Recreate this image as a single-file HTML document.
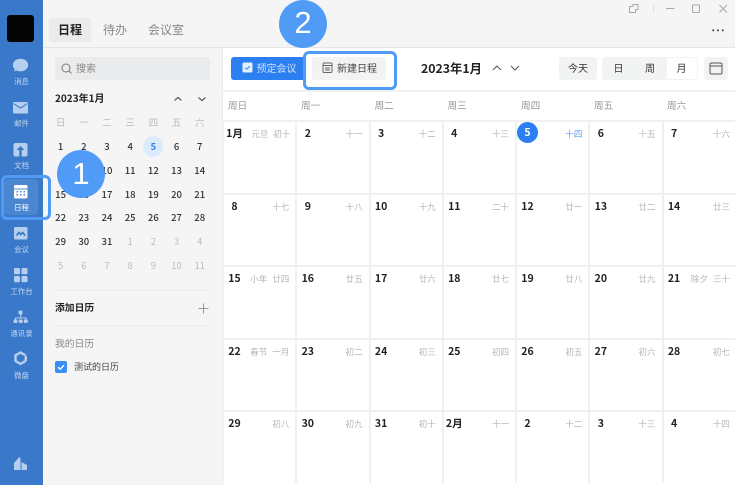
<!DOCTYPE html>
<html lang="zh"><head><meta charset="utf-8"><style>
*{box-sizing:border-box;margin:0;padding:0}
html,body{width:735px;height:485px;overflow:hidden;background:#f5f5f5}
body{position:relative;font-family:"Liberation Sans","Noto Sans CJK SC",sans-serif;color:#333}
.a,.t{position:absolute}
.t{white-space:nowrap;line-height:14px;font-family:"Noto Sans CJK SC","Liberation Sans",sans-serif}
.side{left:0;top:0;width:43px;height:485px;background:#3a78c9}
.lb{left:0;width:43px;text-align:center;font-size:7.4px;color:#c3d7f0;line-height:10px}
.tab{font-size:12px;top:23px;color:#888}
.mini{left:49px;top:115px;display:grid;grid-template-columns:repeat(7,23.2px);grid-auto-rows:23.85px;position:absolute;font-family:"Noto Sans CJK SC",sans-serif;font-size:9.5px;font-weight:500;text-align:center;line-height:14px;color:#333}
.mini span{display:block;padding-top:0}
.mini .g{color:#bbb;font-weight:400}
.main{left:222px;top:48px;width:513px;height:437px;background:#fff;border-left:1px solid #ececec}
.grid{position:absolute;left:222px;top:120px;width:513px;display:grid;grid-template-columns:73.3px 73.3px 73.2px 73.2px 73.4px 73.2px 74.4px;grid-auto-rows:72.6px;font-family:"Noto Sans CJK SC",sans-serif}
.c{position:relative;border-top:2px solid #f0f0f0;border-left:2px solid #f0f0f0}
.c b{position:absolute;left:.5px;top:5px;width:20px;text-align:center;font-size:10.5px;line-height:14px;color:#222;font-weight:700}
.c i{position:absolute;right:6px;top:6px;font-style:normal;font-size:8.5px;line-height:12px;color:#b5b5b5}
.c u{position:absolute;right:28px;top:6px;text-decoration:none;font-size:8.5px;line-height:12px;color:#b5b5b5}
.w{top:98px;font-size:9.6px;color:#999}
.circ{background:#4f9bf5;border-radius:50%;color:#fff;text-align:center;font-family:"Liberation Sans",sans-serif}
</style></head><body>

<div class="a side"></div>
<div class="a" style="left:7px;top:15px;width:27px;height:27px;background:#050505;border-radius:3px"></div>

<svg class="a" style="left:0;top:0" width="43" height="485" viewBox="0 0 43 485">
<g fill="#b6cfee">
<ellipse cx="20.500" cy="65" rx="7.600" ry="6.300"/>
<path d="M15 68l-.8 3.600 4-1.600z"/>
<rect x="13" y="102" width="15" height="11.500" rx="1"/>
<path fill-rule="evenodd" d="M15.500 143h10a2 2 0 0 1 2 2v9.500a2 2 0 0 1-2 2h-10a2 2 0 0 1-2-2V145a2 2 0 0 1 2-2zM20.500 146l-4 4h2.800v6.500h2.400V150h2.800z"/>
<rect x="14" y="227" width="13.500" height="12.500" rx="1.500"/>
<rect x="14" y="268" width="6" height="6.300" rx="1.200"/><rect x="21.500" y="268" width="6" height="6.300" rx="1.200"/>
<rect x="14" y="276" width="6" height="6.300" rx="1.200"/><rect x="21.500" y="276" width="6" height="6.300" rx="1.200"/>
<rect x="18.500" y="310.500" width="4" height="4" rx="1"/>
<rect x="13.500" y="319.500" width="4" height="3.500" rx="1"/><rect x="18.700" y="319.500" width="4" height="3.500" rx="1"/><rect x="23.800" y="319.500" width="4" height="3.500" rx="1"/>
<path d="M15 319.500v-2h11.500v2h-1v-1H16v1zM20.200 314.500h1v3h-1z"/>
<path d="M14 470v-7l5.300-6 1.200 1.500V470z"/>
<path d="M21.500 462l5.500 3v5h-5.500z"/>
</g>
<path d="M25.500 355.300l-5-2.800-5 2.800v5.800l5 2.800 5-2.800" fill="none" stroke="#b6cfee" stroke-width="2.400"/>
<path d="M24.500 356.500l2.500-1v6l-2.500-1z" fill="#b6cfee"/>
<path d="M13.500 103.500l7 4.600 7-4.600" fill="none" stroke="#3a78c9" stroke-width="1"/>
<path d="M16.500 235.500l2.400-3 1.900 2 1.900-2 2.400 3" fill="none" stroke="#3a78c9" stroke-width="1.700"/>
<rect x="4" y="179" width="34" height="36" rx="4" fill="#4b86d1"/>
<rect x="14" y="185" width="13.500" height="13.500" rx="1.500" fill="#fff"/>
<g fill="#4b86d1"><rect x="14" y="188.500" width="13.500" height="1"/>
<rect x="16.500" y="191" width="1.500" height="1.500"/><rect x="20" y="191" width="1.500" height="1.500"/><rect x="23.500" y="191" width="1.500" height="1.500"/>
<rect x="16.500" y="194" width="1.500" height="1.500"/><rect x="20" y="194" width="1.500" height="1.500"/><rect x="23.500" y="194" width="1.500" height="1.500"/></g>
</svg>

<div class="t lb" style="top:77px">消息</div>
<div class="t lb" style="top:119px">邮件</div>
<div class="t lb" style="top:161px">文档</div>
<div class="t lb" style="top:203px;color:#fff">日程</div>
<div class="t lb" style="top:245px">会议</div>
<div class="t lb" style="top:287px">工作台</div>
<div class="t lb" style="top:329px">通讯录</div>
<div class="t lb" style="top:371px">微盘</div>

<!-- top tabs -->
<div class="a" style="left:43px;top:47px;width:692px;height:1px;background:#e6e6e6"></div>
<div class="a" style="left:49px;top:18px;width:42px;height:24px;background:#ebebeb;border-radius:3px"></div>
<div class="t tab" style="left:58px;color:#222;font-weight:700">日程</div>
<div class="t tab" style="left:103px">待办</div>
<div class="t tab" style="left:148px">会议室</div>

<!-- window controls -->
<svg class="a" style="left:620px;top:0" width="115" height="40" viewBox="0 0 115 40" fill="none" stroke="#a8a8a8" stroke-width="1">
<path d="M9.500 6.500h3.500V4.500h5v5h-2.500v3h-6z"/>
<path d="M33.500 5v8" stroke="#e2e2e2"/>
<path d="M46 8.500h8.500"/>
<rect x="72.500" y="5" width="7" height="7.500" rx="1"/>
<path d="M99.500 5l7.500 7.500M107 5l-7.500 7.500"/>
<g fill="#555" stroke="none"><circle cx="93.200" cy="30.300" r="1.100"/><circle cx="98" cy="30.300" r="1.100"/><circle cx="102.800" cy="30.300" r="1.100"/></g>
</svg>

<!-- left panel -->
<div class="a" style="left:55px;top:57px;width:155px;height:23px;background:#eaebec;border-radius:3px"></div>
<svg class="a" style="left:60px;top:62px" width="13" height="13" viewBox="0 0 13 13" fill="none" stroke="#777" stroke-width="1"><circle cx="6" cy="6" r="4"/><path d="M9 9l2.500 2.500"/></svg>
<div class="t" style="left:76px;top:61px;font-size:10px;color:#888">搜索</div>
<div class="t" style="left:55px;top:91px;font-size:10px;font-weight:700;color:#222">2023年1月</div>
<svg class="a" style="left:170px;top:92px" width="40" height="14" viewBox="0 0 40 14" fill="none" stroke="#444" stroke-width="1.100"><path d="M4.500 8.500l3.500-3 3.500 3"/><path d="M28.500 5.500l3.500 3 3.500-3"/></svg>

<div class="a" style="left:142.500px;top:136px;width:20.500px;height:20.500px;border-radius:50%;background:#dcebfc"></div>
<div class="mini">
<span class="g">日</span><span class="g">一</span><span class="g">二</span><span class="g">三</span><span class="g">四</span><span class="g">五</span><span class="g">六</span>
<span>1</span><span>2</span><span>3</span><span>4</span><span style="color:#2b7ff0;font-weight:700">5</span><span>6</span><span>7</span>
<span>8</span><span>9</span><span>10</span><span>11</span><span>12</span><span>13</span><span>14</span>
<span>15</span><span>16</span><span>17</span><span>18</span><span>19</span><span>20</span><span>21</span>
<span>22</span><span>23</span><span>24</span><span>25</span><span>26</span><span>27</span><span>28</span>
<span>29</span><span>30</span><span>31</span><span class="g">1</span><span class="g">2</span><span class="g">3</span><span class="g">4</span>
<span class="g">5</span><span class="g">6</span><span class="g">7</span><span class="g">8</span><span class="g">9</span><span class="g">10</span><span class="g">11</span>
</div>

<div class="a" style="left:55px;top:290px;width:155px;height:1px;background:#ebebeb"></div>
<div class="a" style="left:55px;top:325px;width:155px;height:1px;background:#ebebeb"></div>
<div class="t" style="left:55px;top:300px;font-size:9.800px;font-weight:700;color:#222">添加日历</div>
<svg class="a" style="left:198px;top:303px" width="11" height="11" viewBox="0 0 11 11" stroke="#999" stroke-width="1"><path d="M0.500 5.500h10M5.500 0.500v10"/></svg>
<div class="t" style="left:55px;top:336px;font-size:9.800px;color:#888">我的日历</div>
<div class="a" style="left:55px;top:361px;width:12px;height:12px;background:#3b8ef3;border-radius:2px"></div>
<svg class="a" style="left:55px;top:361px" width="12" height="12" viewBox="0 0 12 12" fill="none" stroke="#fff" stroke-width="1.400"><path d="M3 6.200l2.200 2 3.800-4"/></svg>
<div class="t" style="left:74px;top:360px;font-size:9px;color:#444">测试的日历</div>

<!-- main -->
<div class="a main"></div>
<div class="a" style="left:223px;top:90px;width:512px;height:1.500px;background:#f0f0f0"></div>

<div class="a" style="left:231px;top:57px;width:75px;height:23px;background:#2b7ff0;border-radius:3px"></div>
<svg class="a" style="left:242px;top:62px" width="12" height="12" viewBox="0 0 12 12"><rect x="0.500" y="0.500" width="10" height="10" rx="1.500" fill="#e4effd"/><path d="M3.200 5.600l1.700 1.600 2.800-3" fill="none" stroke="#2b7ff0" stroke-width="1"/></svg>
<div class="t" style="left:256.500px;top:61px;font-size:10px;color:#cfe2fb">预定会议</div>

<div class="a" style="left:312px;top:57px;width:74px;height:23px;background:#f3f3f3;border-radius:3px"></div>
<svg class="a" style="left:322px;top:62px" width="12" height="12" viewBox="0 0 12 12" fill="none" stroke="#666" stroke-width="1"><rect x="1" y="1" width="9" height="9.500" rx="1"/><path d="M1 3.500h9M3 6h5M3 8h5" /></svg>
<div class="t" style="left:337px;top:61px;font-size:10px;color:#444">新建日程</div>
<div class="a" style="left:303px;top:51px;width:94px;height:39px;border:3px solid #4f9bf5;border-radius:6px"></div>

<div class="t" style="left:421px;top:61px;font-size:12.300px;font-weight:700;color:#222">2023年1月</div>
<svg class="a" style="left:490px;top:61px" width="34" height="14" viewBox="0 0 34 14" fill="none" stroke="#555" stroke-width="1"><path d="M3 9l4-4 4 4"/><path d="M21 5l4 4 4-4"/></svg>

<div class="a" style="left:559px;top:57px;width:38px;height:23px;background:#f2f3f3;border-radius:3px"></div>
<div class="t" style="left:568px;top:61px;font-size:10px;color:#333">今天</div>
<div class="a" style="left:602px;top:57px;width:96px;height:23px;background:#f2f3f3;border-radius:3px"></div>
<div class="a" style="left:667px;top:58px;width:30px;height:21px;background:#fff"></div>
<div class="t" style="left:613.500px;top:61px;font-size:10px;color:#333">日</div>
<div class="t" style="left:645px;top:61px;font-size:10px;color:#333">周</div>
<div class="t" style="left:676.500px;top:61px;font-size:10px;color:#333">月</div>
<div class="a" style="left:704px;top:57px;width:24px;height:23px;background:#f2f3f3;border-radius:3px"></div>
<svg class="a" style="left:709px;top:62px" width="14" height="13" viewBox="0 0 14 13" fill="none" stroke="#555" stroke-width="1"><rect x="1" y="1" width="12" height="11" rx="1.500"/><path d="M1 4h12"/></svg>

<div class="t w" style="left:228px">周日</div>
<div class="t w" style="left:301px">周一</div>
<div class="t w" style="left:374.500px">周二</div>
<div class="t w" style="left:447.500px">周三</div>
<div class="t w" style="left:521px">周四</div>
<div class="t w" style="left:594px">周五</div>
<div class="t w" style="left:667px">周六</div>

<div class="grid">
<div class="c"><b>1月</b><u style="right:27px">元旦</u><i style="right:5px">初十</i></div><div class="c"><b>2</b><i>十一</i></div><div class="c"><b>3</b><i>十二</i></div><div class="c"><b>4</b><i>十三</i></div><div class="c"><b style="left:0;top:0;width:21px;height:21px;border-radius:50%;background:#2b7ff0;color:#fff;text-align:center;line-height:21px">5</b><i style="color:#5b9df2">十四</i></div><div class="c"><b>6</b><i>十五</i></div><div class="c"><b>7</b><i>十六</i></div>
<div class="c"><b>8</b><i>十七</i></div><div class="c"><b>9</b><i>十八</i></div><div class="c"><b>10</b><i>十九</i></div><div class="c"><b>11</b><i>二十</i></div><div class="c"><b>12</b><i>廿一</i></div><div class="c"><b>13</b><i>廿二</i></div><div class="c"><b>14</b><i>廿三</i></div>
<div class="c"><b>15</b><u>小年</u><i>廿四</i></div><div class="c"><b>16</b><i>廿五</i></div><div class="c"><b>17</b><i>廿六</i></div><div class="c"><b>18</b><i>廿七</i></div><div class="c"><b>19</b><i>廿八</i></div><div class="c"><b>20</b><i>廿九</i></div><div class="c"><b>21</b><u>除夕</u><i>三十</i></div>
<div class="c"><b>22</b><u>春节</u><i>一月</i></div><div class="c"><b>23</b><i>初二</i></div><div class="c"><b>24</b><i>初三</i></div><div class="c"><b>25</b><i>初四</i></div><div class="c"><b>26</b><i>初五</i></div><div class="c"><b>27</b><i>初六</i></div><div class="c"><b>28</b><i>初七</i></div>
<div class="c"><b>29</b><i>初八</i></div><div class="c"><b>30</b><i>初九</i></div><div class="c"><b>31</b><i>初十</i></div><div class="c"><b>2月</b><i>十一</i></div><div class="c"><b>2</b><i>十二</i></div><div class="c"><b>3</b><i>十三</i></div><div class="c"><b>4</b><i>十四</i></div>
</div>

<!-- annotations -->
<div class="a" style="left:1px;top:175px;width:50px;height:45px;border:3px solid #4f9bf5;border-radius:6px"></div>
<div class="a circ" style="left:57px;top:150px;width:48px;height:48px;font-size:31px;line-height:47px">1</div>
<div class="a circ" style="left:279px;top:0;width:48px;height:48px;font-size:31px;line-height:46px">2</div>
</body></html>
